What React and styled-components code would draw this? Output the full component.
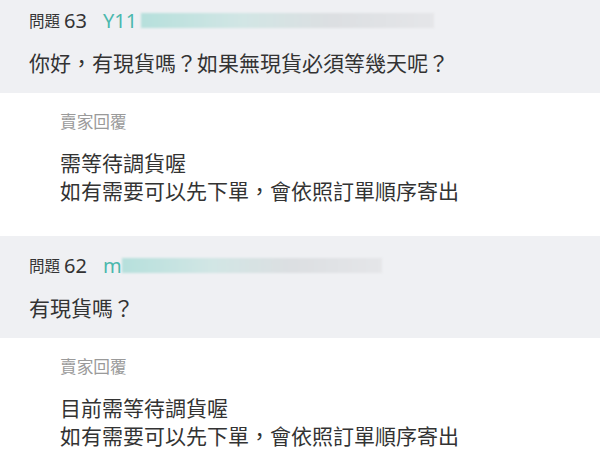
import React from 'react';
import styled, {createGlobalStyle} from 'styled-components';

const GlobalStyle = createGlobalStyle`
  html, body {
    margin: 0;
    padding: 0;
    background: #ffffff;
    overflow: hidden;
  }
  body {
    font-family: "Noto Sans", "Noto Sans CJK TC", sans-serif;
    color: #333333;
  }
`;

const List = styled.div`
  display: flex;
  flex-direction: column;
  margin-top: -9px;
`;

const Question = styled.div`
  background: #eff0f3;
  padding: 17px 29px 16px;
  height: 102px;
  box-sizing: border-box;
`;

const QuestionHead = styled.div`
  display: flex;
  align-items: center;
  height: 24px;
  font-size: 15.5px;
  color: #333;
`;

const QuestionNo = styled.span`
  font-size: 20px;
  margin-left: 4px;
`;

const Asker = styled.span`
  font-size: 20px;
  color: #4bb8ad;
  margin-left: 16px;
`;

// 模糊處理的帳號
const Blur = styled.span`
  display: block;
  width: ${props => props.w}px;
  height: 15px;
  margin-left: ${props => props.gap}px;
  background: linear-gradient(to right, #b6e0dc 0%, #d2e6e5 35%, #dcdfe2 65%, #e5e6e9 100%);
  filter: blur(1px);
`;

const QuestionText = styled.div`
  margin-top: 17px;
  font-size: 21px;
  line-height: 28px;
`;

const Reply = styled.div`
  background: #ffffff;
  padding: 17px 60px 31px;
`;

const ReplyLabel = styled.div`
  font-size: 16.7px;
  line-height: 24px;
  color: #9a9a9a;
`;

const ReplyText = styled.div`
  margin-top: 15px;
  font-size: 21px;
  line-height: 28px;
`;

const items = [
  {
    no: 63,
    name: 'Y11',
    blurGap: 4,
    blurW: 293,
    q: '你好，有現貨嗎？如果無現貨必須等幾天呢？',
    a: ['需等待調貨喔', '如有需要可以先下單，會依照訂單順序寄出'],
  },
  {
    no: 62,
    name: 'm',
    blurGap: 0,
    blurW: 260,
    q: '有現貨嗎？',
    a: ['目前需等待調貨喔', '如有需要可以先下單，會依照訂單順序寄出'],
  },
];

const App = () => {
  return (
    <>
      <GlobalStyle />
      <List>
        {items.map(item => (
          <React.Fragment key={item.no}>
            <Question>
              <QuestionHead>
                問題
                <QuestionNo>{item.no}</QuestionNo>
                <Asker>{item.name}</Asker>
                <Blur w={item.blurW} gap={item.blurGap} />
              </QuestionHead>
              <QuestionText>{item.q}</QuestionText>
            </Question>
            <Reply>
              <ReplyLabel>賣家回覆</ReplyLabel>
              <ReplyText>
                {item.a.map(line => <div key={line}>{line}</div>)}
              </ReplyText>
            </Reply>
          </React.Fragment>
        ))}
      </List>
    </>
  );
};

export default App;
